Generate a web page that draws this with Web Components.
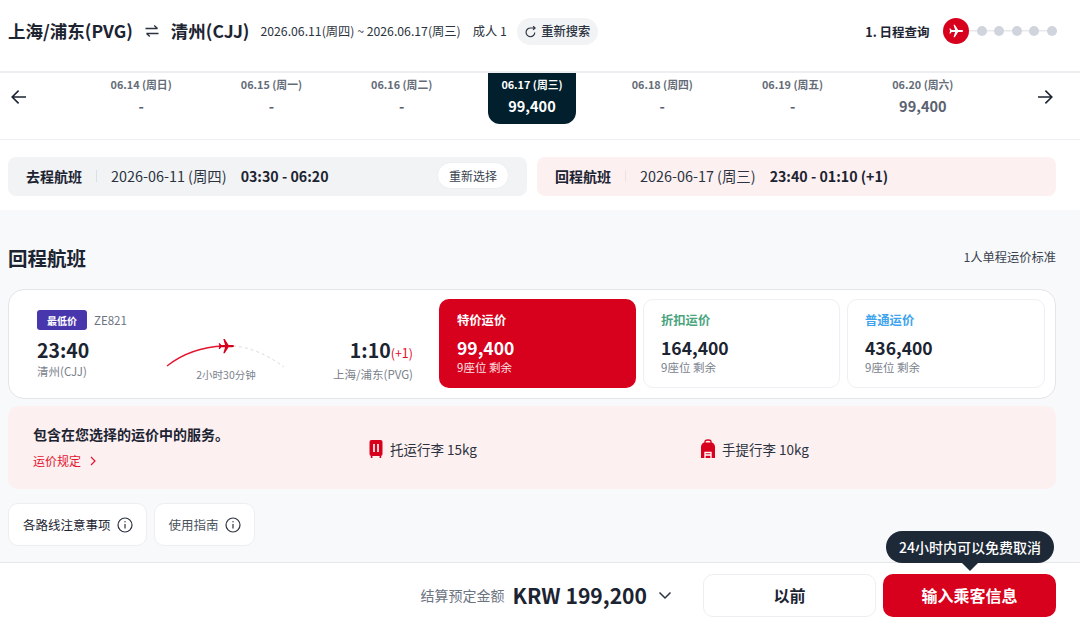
<!DOCTYPE html>
<html lang="zh"><head><meta charset="utf-8">
<style>
html,body{margin:0;padding:0;background:#fff}
body{width:1080px;height:624px;overflow:hidden;display:flex;flex-direction:column;font-family:"Noto Sans CJK SC","Noto Sans",sans-serif;color:#1c2432}
</style></head><body>
<x-topbar></x-topbar>
<x-datestrip></x-datestrip>
<x-selected></x-selected>
<x-main>
  <x-flight-card></x-flight-card>
  <x-services></x-services>
  <x-notes></x-notes>
</x-main>
<x-footer></x-footer>
<script>
const PLANE='M21.5 12c0-.8-.9-1.3-2-1.3h-4.6L10.4 3.6H8.7l2.1 7.1H6.2L4.6 8.6H3.2l.9 3.4-.9 3.4h1.4l1.6-2.1h4.6l-2.1 7.1h1.7l4.500-7.1h4.600c1.100 0 2-.5 2-1.300z';
function def(name,html){customElements.define(name,class extends HTMLElement{constructor(){super();this.attachShadow({mode:'open'}).innerHTML=typeof html==='function'?html(this):html}})}

def('x-topbar',`<style>
:host{display:flex;align-items:center;height:73px;box-sizing:border-box;padding:0 23px 9px 8px;border-bottom:2px solid #eceef1;flex:none}
.t{font-size:17.5px;font-weight:700;line-height:26px}
.sw{margin:0 11px;width:16px;height:16px;display:block}
.d{font-size:12.25px;margin-left:11px;color:#2b3340;white-space:nowrap}
.p{font-size:12.25px;margin-left:12px;color:#2b3340;white-space:nowrap}
.b{margin-left:10px;height:27px;width:81px;box-sizing:border-box;border-radius:14px;background:#f2f3f5;display:flex;align-items:center;justify-content:center;gap:4px;font-size:12.25px;color:#2b3340;font-weight:500}
.b svg{width:13px;height:13px}
</style>
<span class="t">上海/浦东(PVG)</span>
<svg class="sw" viewBox="0 0 16 16" fill="none" stroke="#2b3340" stroke-width="1.4"><path d="M1.500 5.500h12M10.200 2.500 13.500 5.500M14.500 10.500h-12M5.800 13.500 2.500 10.500"/></svg>
<span class="t">清州(CJJ)</span>
<span class="d">2026.06.11(周四) ~ 2026.06.17(周三)</span>
<span class="p">成人 1</span>
<span class="b"><svg viewBox="0 0 14 14" fill="none" stroke="#2b3340" stroke-width="1.2"><path d="M11.600 8A4.700 4.700 0 1 1 7.300 3.200H12M9.800 1.200l2.200 2-2.200 2"/></svg>重新搜索</span>
<x-steps></x-steps>`);

def('x-steps',`<style>
:host{display:flex;align-items:center;margin-left:auto;position:relative}
.l{font-size:12.5px;font-weight:700;margin-right:13px;white-space:nowrap;color:#1c2432}
.c{width:26px;height:26px;border-radius:50%;background:#d7001d;display:flex;align-items:center;justify-content:center;position:relative;z-index:1}
.c svg{width:18px;height:18px}
.dots{display:flex;gap:7.600px;background:linear-gradient(#e6e8ec,#e6e8ec) center/100% 1.500px no-repeat;padding-left:8px}
i{display:block;width:10px;height:10px;border-radius:50%;background:#d0d4dc}
</style><span class="l">1. 日程查询</span><span class="c"><svg viewBox="0 0 24 24" fill="#fff"><path d="${PLANE}"/></svg></span><span class="dots"><i></i><i></i><i></i><i></i><i></i></span>`);

def('x-date',h=>{const on=h.hasAttribute('on');return `<style>
:host{display:flex;flex-direction:column;align-items:center;position:relative}
.box{display:flex;flex-direction:column;align-items:center;width:88px;height:51px;box-sizing:border-box;padding-top:3px;border-radius:0 0 12px 12px;${on?'background:#021f2d;color:#fff':'color:#5a6270'}}
.d{font-size:10.800px;font-weight:700;line-height:16px;white-space:nowrap;${on?'':'color:#646c78'}}
.p{font-size:14.500px;font-weight:700;line-height:20px;margin-top:3.500px;}
</style><div class="box"><span class="d">${h.getAttribute('d')}</span><span class="p">${h.getAttribute('p')}</span></div>`});

def('x-datestrip',`<style>
:host{display:grid;grid-template-columns:76px 912px 92px;height:67px;box-sizing:border-box;border-bottom:1px solid #eceef1;flex:none}
.g{display:grid;grid-template-columns:repeat(7,1fr)}
.a{display:flex;align-items:flex-start;padding-top:15px;box-sizing:border-box}
.a svg{width:18px;height:18px;display:block}
.a.l{padding-left:10px}.a.r{padding-left:48px}
</style>
<div class="a l"><svg viewBox="0 0 18 18" fill="none" stroke="#1c2432" stroke-width="1.600"><path d="M16 9H2.400M8.600 2.600 2.200 9l6.400 6.400"/></svg></div>
<div class="g">
<x-date d="06.14 (周日)" p="-"></x-date>
<x-date d="06.15 (周一)" p="-"></x-date>
<x-date d="06.16 (周二)" p="-"></x-date>
<x-date on d="06.17 (周三)" p="99,400"></x-date>
<x-date d="06.18 (周四)" p="-"></x-date>
<x-date d="06.19 (周五)" p="-"></x-date>
<x-date d="06.20 (周六)" p="99,400"></x-date>
</div>
<div class="a r"><svg viewBox="0 0 18 18" fill="none" stroke="#1c2432" stroke-width="1.600"><path d="M2 9h13.600M9.400 2.600 15.800 9l-6.400 6.400"/></svg></div>`);

def('x-leg',h=>{const r=h.hasAttribute('ret');return `<style>
:host{display:flex;align-items:center;height:39px;box-sizing:border-box;padding:0 18px 2px;border-radius:8px;background:${r?'#fdf0f1':'#f2f3f5'};font-size:14px;color:#1c2432}
.n{font-weight:700;font-size:14px}
.sep{width:1px;height:12px;background:#dcdfe4;margin:0 14px}
.s{font-size:14.400px;color:#2b3340}
.t{font-size:14.200px;font-weight:700;margin-left:14px}
.b{margin-left:auto;height:27px;width:72px;border-radius:14px;background:#fff;border:1px solid #eceef1;box-sizing:border-box;display:flex;align-items:center;justify-content:center;font-size:12px;color:#3a4250}
</style><span class="n">${h.getAttribute('n')}</span><span class="sep" ${r?'style="background:#f6dfe2"':''}></span><span class="s">${h.getAttribute('s')}</span><span class="t">${h.getAttribute('t')}</span>${r?'':'<span class="b">重新选择</span>'}`});

def('x-selected',`<style>
:host{display:grid;grid-template-columns:519px 519px;gap:10px;padding:17px 24px 14px 8px;background:#fff;flex:none;height:70px;box-sizing:border-box}
</style>
<x-leg n="去程航班" s="2026-06-11 (周四)" t="03:30 - 06:20"></x-leg>
<x-leg ret n="回程航班" s="2026-06-17 (周三)" t="23:40 - 01:10 (+1)"></x-leg>`);

def('x-main',`<style>
:host{display:flex;flex-direction:column;flex:1;min-height:0;background:#f8f9fb;padding:0 24px 0 8px;box-sizing:border-box}
.h{display:flex;align-items:center;justify-content:space-between;height:79px;padding-top:15px;box-sizing:border-box;flex:none}
.h b{font-size:19.500px;font-weight:700;color:#1c2432}
.h span{font-size:12.250px;color:#3a4250}
</style><div class="h"><b>回程航班</b><span>1人单程运价标准</span></div><slot></slot>`);

def('x-fare',h=>{const on=h.hasAttribute('on');return `<style>
:host{display:block;box-sizing:border-box;border-radius:10px;${on?'padding:11px 18px;background:#d7001d;color:#fff;':'padding:10px 17px;background:#fff;border:1px solid #eef0f3;'}}
.n{font-size:12.300px;font-weight:700;line-height:20px;color:${on?'#fff':h.getAttribute('c')}}
.p{font-size:17.500px;font-weight:700;line-height:24px;margin-top:6px;${on?'':'color:#1c2432'}}
.s{font-size:11.500px;line-height:16px;margin-top:-1px;color:${on?'#fde3e6':'#7a818c'}}
</style><div class="n">${h.getAttribute('n')}</div><div class="p">${h.getAttribute('p')}</div><div class="s">9座位 剩余</div>`});

def('x-flight-card',`<style>
:host{display:grid;grid-template-columns:423px 197px 197px 198px;column-gap:7px;height:110px;box-sizing:border-box;padding:9px 10px 10px 0;background:#fff;border:1px solid #e3e5ea;border-radius:16px;flex:none}
.f{padding:11px 19px 0 28px;display:flex;flex-direction:column;position:relative}
.top{display:flex;align-items:center;gap:7px;height:20px}
.tag{background:#4836ad;color:#fff;font-size:10px;font-weight:700;width:50px;height:20px;border-radius:3px;display:flex;align-items:center;justify-content:center}
.no{font-size:11.500px;color:#6d747f}
.r{display:flex;justify-content:space-between;margin-top:7px}
.e{display:flex;flex-direction:column}
.e.z{align-items:flex-end}
.tm{font-size:19.500px;font-weight:700;line-height:26px;color:#1c2432}
.pl{font-size:12.500px;font-weight:400;color:#e60f2e}
.ct{font-size:11.500px;line-height:16px;color:#7a818c;white-space:nowrap}
.m{position:absolute;left:157px;top:36px;width:120px;height:62px}
.m svg{display:block;width:120px;height:36px;overflow:visible}
.m span{display:block;text-align:center;font-size:10.500px;line-height:14px;color:#7a818c;margin-top:-3px}
</style>
<div class="f">
<div class="top"><span class="tag">最低价</span><span class="no">ZE821</span></div>
<div class="r"><div class="e"><span class="tm">23:40</span><span class="ct">清州(CJJ)</span></div>
<div class="e z"><span class="tm">1:10<span class="pl">(+1)</span></span><span class="ct">上海/浦东(PVG)</span></div></div>
<div class="m"><svg viewBox="0 0 120 36"><path d="M1 31C16 19 34 12 58 11" fill="none" stroke="#e3142f" stroke-width="1.300"/><path d="M67 11C84 12 102 20 118 32" fill="none" stroke="#d9dce1" stroke-width="1" stroke-dasharray="3 3"/><g transform="translate(50 1) scale(.84)" fill="#d7001d"><path d="${PLANE}"/></g></svg><span>2小时30分钟</span></div>
</div>
<x-fare on n="特价运价" p="99,400"></x-fare>
<x-fare n="折扣运价" c="#4aa57e" p="164,400"></x-fare>
<x-fare n="普通运价" c="#3ea4ee" p="436,400"></x-fare>`);

def('x-services',`<style>
:host{display:grid;grid-template-columns:335px 332px 1fr;align-items:center;height:83px;box-sizing:border-box;margin-top:7px;background:#fdf0f1;border-radius:10px;padding-left:25px;flex:none;margin-bottom:14px}
.t{font-size:14px;font-weight:700;line-height:20px;color:#1c2432;margin-top:-1px}
.l{display:flex;align-items:center;gap:8px;font-size:12px;color:#e3142f;margin-top:8px;line-height:18px}
.l svg{width:8px;height:10px}
.i{display:flex;align-items:center;gap:6px;font-size:13.500px;color:#2b3340;padding-top:2px}
.i svg{width:16px;height:20px;display:block}
</style>
<div><div class="t">包含在您选择的运价中的服务。</div><div class="l">运价规定<svg viewBox="0 0 8 10" fill="none" stroke="#e3142f" stroke-width="1.200"><path d="M2 1l4 4-4 4"/></svg></div></div>
<div class="i"><svg viewBox="0 0 16 20"><rect x="1.500" y="1" width="13" height="16" rx="2" fill="#d7001d"/><path d="M6 5v8M10 5v8" stroke="#fff" stroke-width="1.600"/><path d="M3.600 17v2M12.400 17v2" stroke="#d7001d" stroke-width="1.600"/></svg>托运行李 15kg</div>
<div class="i"><svg viewBox="0 0 16 20"><path d="M5 4V2.600C5 1.600 6 1 8 1s3 .6 3 1.600V4" fill="none" stroke="#d7001d" stroke-width="1.300"/><path d="M1 8c0-2.400 1.600-4.500 4-4.500h6c2.400 0 4 2.100 4 4.500V19H1z" fill="#d7001d"/><path d="M5 19v-5.500h6V19M5 16h6" fill="none" stroke="#fff" stroke-width="1.300"/></svg>手提行李 10kg</div>`);

def('x-note',h=>`<style>
:host{display:flex;align-items:center;gap:6px;height:43px;box-sizing:border-box;padding:0 13px 0 14px;background:#fff;border:1px solid #eceef1;border-radius:10px;font-size:12.500px;color:${h.getAttribute('c')||'#1c2432'}}
svg{width:16px;height:16px}
</style><slot></slot><svg viewBox="0 0 16 16" fill="none" stroke="#2b3340" stroke-width="1.200"><circle cx="8" cy="8" r="7"/><path d="M8 7v4.500"/><circle cx="8" cy="4.800" r=".7" fill="#2b3340" stroke="none"/></svg>`);

def('x-notes',`<style>:host{display:flex;gap:7px}</style><x-note>各路线注意事项</x-note><x-note c="#4a525e">使用指南</x-note>`);

def('x-footer',`<style>
:host{display:flex;align-items:center;justify-content:flex-end;height:62px;box-sizing:border-box;flex:none;background:#fff;border-top:1px solid #e6e8ec;padding:3px 24px 0 0;position:relative}
.l{font-size:14px;color:#6d747f;margin-right:8px}
.a{font-size:21.100px;font-weight:700;color:#1c2432;white-space:nowrap}
.c{width:14px;height:9px;margin:0 31px 0 11px}
.b{height:43px;box-sizing:border-box;border-radius:10px;display:flex;align-items:center;justify-content:center;font-size:16px;font-weight:700}
.pv{width:173px;background:#fff;border:1px solid #eceef1;color:#1c2432;margin-right:7px}
.nx{width:173px;background:#d7001d;color:#fff}
.tip{position:absolute;right:26px;top:-32px;height:32px;width:168px;border-radius:16px;background:#1e2937;color:#fff;font-size:14px;font-weight:500;display:flex;align-items:center;justify-content:center;white-space:nowrap}
.tip:after{content:"";position:absolute;left:50%;margin-left:-9px;bottom:-8px;border:9px solid transparent;border-bottom:0;border-top-color:#1e2937}
</style>
<span class="l">结算预定金额</span><span class="a">KRW 199,200</span>
<svg class="c" viewBox="0 0 14 9" fill="none" stroke="#2b3340" stroke-width="1.500"><path d="M1.500 1.500 7 7l5.500-5.500"/></svg>
<span class="b pv">以前</span><span class="b nx">输入乘客信息</span>
<span class="tip">24小时内可以免费取消</span>`);
</script>
</body></html>
